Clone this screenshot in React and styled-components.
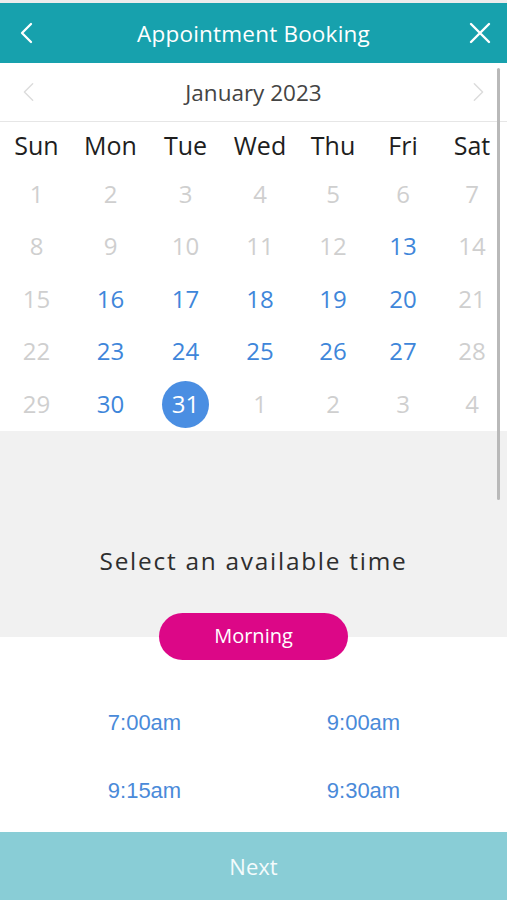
import React from 'react';
import styled, { createGlobalStyle } from 'styled-components';

const GlobalStyle = createGlobalStyle`
  body {
    margin: 0;
    background: #ffffff;
    font-family: "Open Sans", "Noto Sans", sans-serif;
  }
`;

const Page = styled.div`
  position: relative;
  width: 507px;
  min-height: 900px;
  display: flex;
  flex-direction: column;
  background: #fff;
  overflow: hidden;
`;

const TopStrip = styled.div`
  height: 3px;
  background: #ececec;
`;

const Header = styled.header`
  height: 60px;
  background: #17a1ad;
  display: flex;
  align-items: center;
  justify-content: space-between;
  padding: 0 14px;
  color: #fff;
`;

const Title = styled.h1`
  margin: 0;
  font-size: 22.5px;
  font-weight: 400;
  letter-spacing: 0.2px;
`;

const IconBtn = styled.div`
  width: 26px;
  height: 26px;
  display: flex;
  align-items: center;
  justify-content: center;
`;

const MonthBar = styled.div`
  height: 58px;
  border-bottom: 1px solid #e6e6e6;
  display: flex;
  align-items: center;
  justify-content: space-between;
  padding: 0 18px;
`;

const MonthLabel = styled.div`
  font-size: 22.5px;
  color: #444;
`;

const Grid = styled.div`
  display: grid;
  grid-template-columns: 73fr 75fr 75fr 74fr 72fr 68fr 70fr;
`;

const WeekDay = styled.div`
  height: 46px;
  display: flex;
  align-items: center;
  justify-content: center;
  font-size: 25px;
  color: #1e1e1e;
`;

const DayCell = styled.div`
  height: 52.5px;
  display: flex;
  align-items: center;
  justify-content: center;
`;

const DayNum = styled.span`
  width: 47px;
  height: 47px;
  border-radius: 50%;
  display: flex;
  align-items: center;
  justify-content: center;
  font-size: 24px;
  padding-bottom: 2px;
  box-sizing: border-box;
  color: ${({ $state }) =>
    $state === 'selected' ? '#fff' : $state === 'open' ? '#3e86da' : '#cfcfcf'};
  background: ${({ $state }) => ($state === 'selected' ? '#4a8ee2' : 'transparent')};
`;

const Prompt = styled.section`
  height: 206px;
  background: #f1f1f1;
  display: flex;
  align-items: flex-start;
  justify-content: center;
  box-sizing: border-box;
  padding-top: 113px;
`;

const PromptText = styled.div`
  font-size: 24.4px;
  color: #2e2e2e;
  letter-spacing: 1.75px;
`;

const PillRow = styled.div`
  display: flex;
  justify-content: center;
  margin-top: -24px;
`;

const Pill = styled.div`
  width: 189px;
  height: 47px;
  border-radius: 24px;
  background: #dc0787;
  color: #fff;
  font-size: 20px;
  display: flex;
  align-items: center;
  justify-content: center;
  padding-bottom: 2px;
  box-sizing: border-box;
`;

const Times = styled.div`
  flex: 1;
  display: grid;
  grid-template-columns: 1fr 1fr;
  grid-auto-rows: 68px;
  padding: 29px 34px 0 35px;
`;

const Time = styled.div`
  display: flex;
  align-items: center;
  justify-content: center;
  font-family: "Liberation Sans", Arial, sans-serif;
  font-size: 22px;
  color: #4a8ad9;
`;

const NextBar = styled.div`
  height: 68px;
  background: #89cdd6;
  display: flex;
  align-items: center;
  justify-content: center;
  color: #f4fbfc;
  font-size: 22px;
`;

const Scrollbar = styled.div`
  position: absolute;
  left: 497px;
  top: 68px;
  width: 3px;
  height: 432px;
  border-radius: 2px;
  background: #b9b9b9;
`;

const Chevron = ({ dir = 'left', color, size = 24, stroke = 2.5 }) => (
  <svg width={size} height={size} viewBox="0 0 24 24" fill="none">
    <path
      d={dir === 'left' ? 'M16 3 L7 12 L16 21' : 'M8 3 L17 12 L8 21'}
      stroke={color}
      strokeWidth={stroke}
      strokeLinecap="round"
      strokeLinejoin="round"
    />
  </svg>
);

const Cross = () => (
  <svg width="22" height="22" viewBox="0 0 22 22" fill="none">
    <path d="M2 2 L20 20 M20 2 L2 20" stroke="#fff" strokeWidth="2.4" strokeLinecap="round" />
  </svg>
);

const weekDays = ['Sun', 'Mon', 'Tue', 'Wed', 'Thu', 'Fri', 'Sat'];
const openDays = [13, 16, 17, 18, 19, 20, 23, 24, 25, 26, 27, 30];

const days = [];
for (let d = 1; d <= 31; d++) {
  days.push({ n: d, state: d === 31 ? 'selected' : openDays.includes(d) ? 'open' : 'off' });
}
for (let d = 1; d <= 4; d++) days.push({ n: d, state: 'off' });

const times = ['7:00am', '9:00am', '9:15am', '9:30am'];

export default function App() {
  return (
    <Page>
      <GlobalStyle />
      <TopStrip />
      <Header>
        <IconBtn><Chevron dir="left" color="#fff" size={24} stroke={2.3} /></IconBtn>
        <Title>Appointment Booking</Title>
        <IconBtn><Cross /></IconBtn>
      </Header>
      <MonthBar>
        <Chevron dir="left" color="#dcdcdc" size={22} stroke={1.6} />
        <MonthLabel>January 2023</MonthLabel>
        <Chevron dir="right" color="#dcdcdc" size={22} stroke={1.6} />
      </MonthBar>
      <Grid>
        {weekDays.map(w => <WeekDay key={w}>{w}</WeekDay>)}
        {days.map((d, i) => (
          <DayCell key={i}>
            <DayNum $state={d.state}>{d.n}</DayNum>
          </DayCell>
        ))}
      </Grid>
      <Prompt>
        <PromptText>Select an available time</PromptText>
      </Prompt>
      <PillRow>
        <Pill>Morning</Pill>
      </PillRow>
      <Times>
        {times.map(t => <Time key={t}>{t}</Time>)}
      </Times>
      <NextBar>Next</NextBar>
      <Scrollbar />
    </Page>
  );
}
